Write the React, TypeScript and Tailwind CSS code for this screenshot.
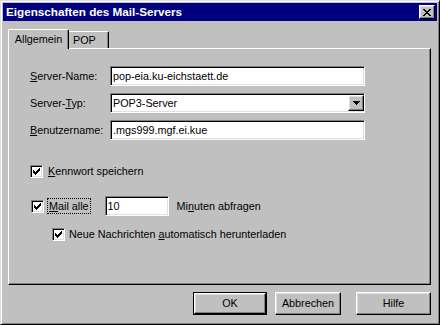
import React from 'react';

// classic 3D edges
const raised =
  'border border-t-white border-l-white border-r-black border-b-black shadow-[inset_-1px_-1px_0_#808080,inset_1px_1px_0_#dfdfdf]';
const sunken =
  'border border-t-[#808080] border-l-[#808080] border-r-white border-b-white shadow-[inset_1px_1px_0_#000,inset_-1px_-1px_0_#dfdfdf]';

function CheckBox() {
  return (
    <span className={`w-[13px] h-[13px] bg-white flex items-center justify-center shrink-0 ${sunken}`}>
      <svg width="7" height="7" viewBox="0 0 7 7" shapeRendering="crispEdges">
        <path
          d="M0 2h1v3H0z M1 3h1v3H1z M2 4h1v3H2z M3 3h1v3H3z M4 2h1v3H4z M5 1h1v3H5z M6 0h1v3H6z"
          fill="#000"
        />
      </svg>
    </span>
  );
}

function Field({ value, width }: { value: string; width: string }) {
  return (
    <div className={`h-[20px] bg-white flex items-center px-[2px] ${width} ${sunken}`}>
      <span className="text-black leading-none">{value}</span>
    </div>
  );
}

function Button({ label, width, isDefault }: { label: string; width: string; isDefault?: boolean }) {
  return (
    <div className={`h-[23px] ${width} ${isDefault ? 'border border-black' : ''}`}>
      <div className={`h-full w-full flex items-center justify-center ${raised}`}>{label}</div>
    </div>
  );
}

export default function App() {
  return (
    <div className="w-[440px] h-[325px] bg-[#c0c0c0] font-['Liberation_Sans',Arial,sans-serif] text-[10.8px] text-black select-none">
      <div className="h-full w-full p-[2px] border border-t-[#dfdfdf] border-l-[#dfdfdf] border-r-black border-b-black shadow-[inset_1px_1px_0_#fff,inset_-1px_-1px_0_#808080]">
        {/* Title bar */}
        <div className="h-[18px] bg-[#000080] flex items-center justify-between pl-[3px] pr-[2px]">
          <span className="text-white font-bold text-[11.7px] leading-none">Eigenschaften des Mail-Servers</span>
          <div className={`w-[16px] h-[14px] bg-[#c0c0c0] flex items-center justify-center ${raised}`}>
            <svg width="8" height="7" viewBox="0 0 8 7" shapeRendering="crispEdges">
              <path
                d="M0 0h2v1H0z M6 0h2v1H6z M1 1h2v1H1z M5 1h2v1H5z M2 2h4v1H2z M3 3h2v1H3z M2 4h4v1H2z M1 5h2v1H1z M5 5h2v1H5z M0 6h2v1H0z M6 6h2v1H6z"
                fill="#000"
              />
            </svg>
          </div>
        </div>

        <div className="pl-[5px] pr-[6px]">
          {/* Tabs */}
          <div className="mt-[8px] h-[19px] flex items-end">
            <div className="relative z-10 h-[20px] -mb-[1px] w-[61px] bg-[#c0c0c0] border-l border-t border-r border-l-white border-t-white border-r-black rounded-t-[2px] shadow-[inset_-1px_0_0_#808080] flex items-center justify-center pb-[1px]">
              Allgemein
            </div>
            <div className="h-[17px] w-[40px] border-t border-r border-t-white border-r-black rounded-tr-[2px] shadow-[inset_-1px_0_0_#808080] flex items-center pl-[4px]">
              POP
            </div>
          </div>

          {/* Panel */}
          <div className="h-[237px] border border-t-white border-l-white border-r-black border-b-black shadow-[inset_-1px_-1px_0_#808080] pl-[21px] pt-[17px]">
            <div className="flex flex-col gap-[7px]">
              <div className="flex items-center">
                <span className="w-[80px]">
                  <u>S</u>erver-Name:
                </span>
                <Field value="pop-eia.ku-eichstaett.de" width="w-[255px]" />
              </div>
              <div className="flex items-center">
                <span className="w-[80px]">
                  Server-<u>T</u>yp:
                </span>
                <div className={`h-[20px] w-[255px] bg-white flex items-center justify-between pl-[2px] ${sunken}`}>
                  <span className="leading-none">POP3-Server</span>
                  <div className={`w-[16px] h-[16px] bg-[#c0c0c0] flex items-center justify-center ${raised}`}>
                    <svg width="7" height="4" viewBox="0 0 7 4" shapeRendering="crispEdges">
                      <path d="M0 0h7v1H0z M1 1h5v1H1z M2 2h3v1H2z M3 3h1v1H3z" fill="#000" />
                    </svg>
                  </div>
                </div>
              </div>
              <div className="flex items-center">
                <span className="w-[80px]">
                  <u>B</u>enutzername:
                </span>
                <Field value=".mgs999.mgf.ei.kue" width="w-[255px]" />
              </div>
            </div>

            <div className="mt-[23px] flex items-center gap-[5px]">
              <CheckBox />
              <span>
                <u>K</u>ennwort speichern
              </span>
            </div>

            <div className="mt-[17px] flex items-center">
              <span className="ml-[1px]">
                <CheckBox />
              </span>
              <span className="ml-[3px] border border-dotted border-black px-[1px] leading-[14px]">
                <u>M</u>ail alle
              </span>
              <span className="ml-[14px]">
                <Field value="10" width="w-[64px]" />
              </span>
              <span className="ml-[8px]">
                Mi<u>n</u>uten abfragen
              </span>
            </div>

            <div className="mt-[10px] ml-[22px] flex items-center gap-[4px]">
              <CheckBox />
              <span>
                Neue Nachrichten <u>a</u>utomatisch herunterladen
              </span>
            </div>
          </div>

          {/* Buttons */}
          <div className="mt-[7px] flex justify-end">
            <Button label="OK" width="w-[74px]" isDefault />
            <span className="ml-[8px]">
              <Button label="Abbrechen" width="w-[66px]" />
            </span>
            <span className="ml-[15px]">
              <Button label="Hilfe" width="w-[75px]" />
            </span>
          </div>
        </div>
      </div>
    </div>
  );
}
